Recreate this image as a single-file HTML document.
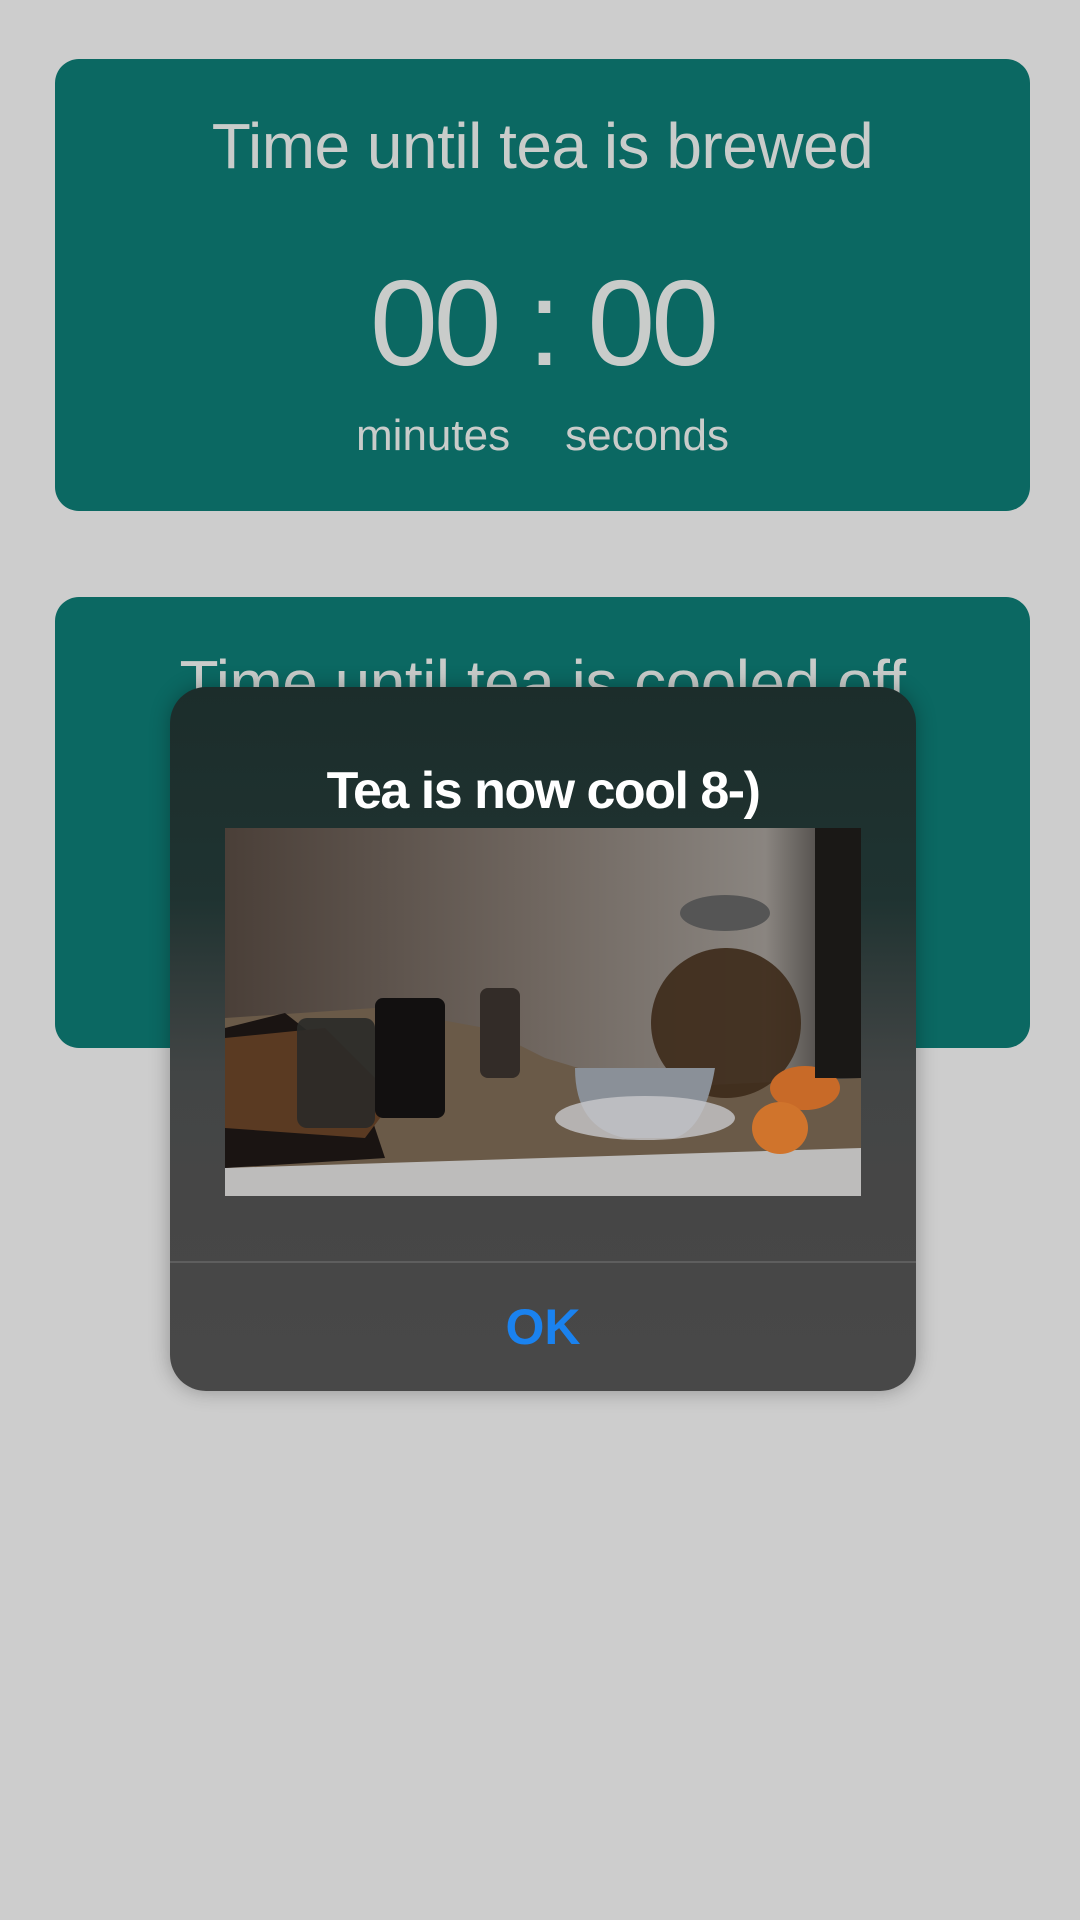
<!DOCTYPE html>
<html><head><meta charset="utf-8"><style>
html,body{margin:0;padding:0}
body{width:1080px;height:1920px;background:#cdcdcd;position:relative;overflow:hidden;font-family:"Liberation Sans",sans-serif}
.card{position:absolute;left:55px;width:975px;background:#0b6862;border-radius:24px}
.t{position:absolute;left:0;width:100%;text-align:center;color:#c9ccca;white-space:nowrap;line-height:1}
.dlg{position:absolute;left:170px;top:687px;width:746px;height:704px;border-radius:36px;overflow:hidden;
background:linear-gradient(180deg,#1c2d2b 0%,#1f3331 30%,#2e3a39 40%,#424545 55%,#464646 70%,#484848 100%);box-shadow:0 0 20px rgba(0,0,0,.3)}
</style></head><body>
<div class="card" style="top:59px;height:452px">
  <div class="t" style="top:55px;font-size:64px;letter-spacing:-0.5px">Time until tea is brewed</div>
  <div class="t" style="top:203px;font-size:122px;font-weight:300;letter-spacing:-4px">00 : 00</div>
  <div class="t" style="top:355px;font-size:44px"><span style="margin-right:55px">minutes</span><span>seconds</span></div>
</div>
<div class="card" style="top:597px;height:451px">
  <div class="t" style="top:54px;font-size:64px;letter-spacing:-0.5px">Time until tea is cooled off</div>
</div>
<div class="dlg">
  <div style="position:absolute;top:78px;width:100%;text-align:center;color:#fff;font-weight:bold;font-size:52px;letter-spacing:-1.5px;line-height:1">Tea is now cool 8-)</div>
  <svg style="position:absolute;left:55px;top:141px" width="636" height="368" viewBox="0 0 636 368">
    <defs>
      <linearGradient id="w" x1="0" x2="1"><stop offset="0" stop-color="#4a3f38"/><stop offset=".5" stop-color="#706760"/><stop offset=".85" stop-color="#8a8580"/><stop offset="1" stop-color="#2a2826"/></linearGradient>
    </defs>
    <rect width="636" height="368" fill="url(#w)"/>
    <rect y="320" width="636" height="48" fill="#bdbcbb"/>
    <path d="M0 190 L150 180 L260 200 L320 230 L420 260 L636 250 L636 320 L0 340Z" fill="#6a5a48"/>
    <path d="M0 200 L60 185 L130 240 L160 330 L0 340Z" fill="#1a1412"/>
    <path d="M0 210 L100 200 L170 270 L140 310 L0 300Z" fill="#5a3a22"/>
    <rect x="72" y="190" width="78" height="110" rx="10" fill="#2a2a28" opacity=".9"/>
    <rect x="150" y="170" width="70" height="120" rx="8" fill="#121010"/>
    <rect x="255" y="160" width="40" height="90" rx="8" fill="#332c28"/>
    <path d="M500 120 a75 75 0 1 0 2 0Z" fill="#3d2a1a" opacity=".9"/>
    <ellipse cx="500" cy="85" rx="45" ry="18" fill="#555"/>
    <path d="M350 240 q0 60 50 70 h50 q30-10 40-70Z" fill="#8a9098"/>
    <ellipse cx="420" cy="290" rx="90" ry="22" fill="#c8c8cc" opacity=".8"/>
    <ellipse cx="580" cy="260" rx="35" ry="22" fill="#c86a28"/>
    <ellipse cx="555" cy="300" rx="28" ry="26" fill="#d0742c"/>
    <rect x="590" y="0" width="46" height="250" fill="#1a1816"/>
  </svg>
  <div style="position:absolute;top:574px;left:0;width:100%;height:2px;background:#5e5e5e"></div>
  <div style="position:absolute;top:615px;width:100%;text-align:center;color:#1a82ef;font-weight:bold;font-size:50px;line-height:1">OK</div>
</div>
</body></html>
